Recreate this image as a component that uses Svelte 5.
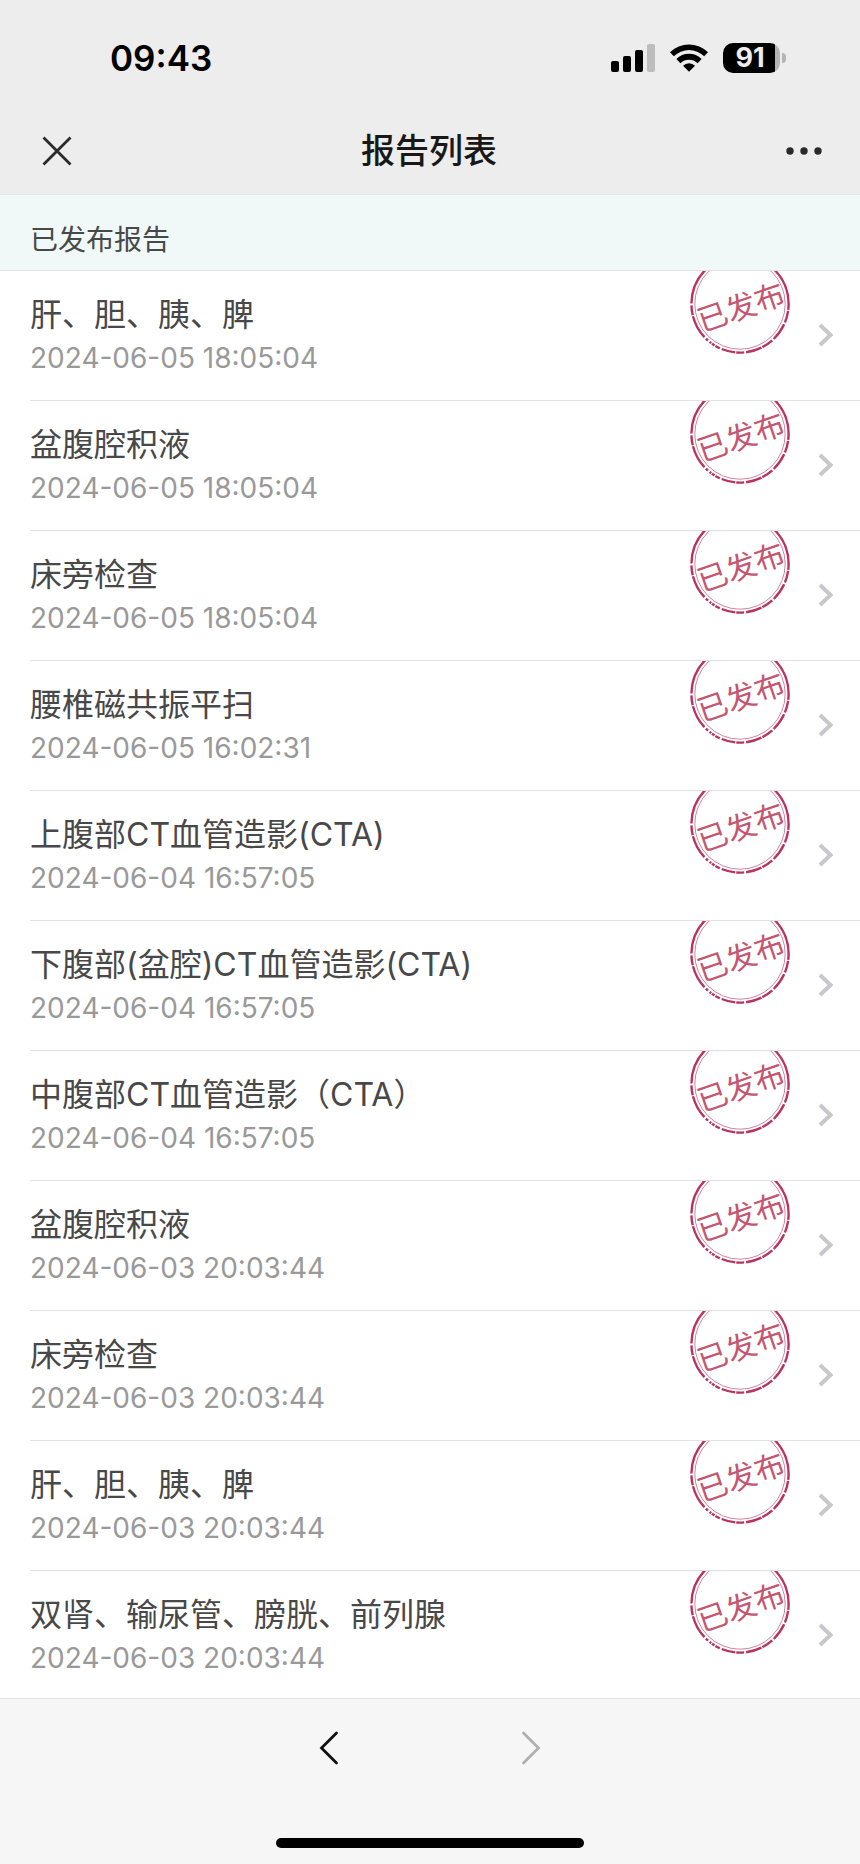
<script lang="ts">
  type Report = { name: string; time: string };

  const reports: Report[] = [
    { name: '肝、胆、胰、脾', time: '2024-06-05 18:05:04' },
    { name: '盆腹腔积液', time: '2024-06-05 18:05:04' },
    { name: '床旁检查', time: '2024-06-05 18:05:04' },
    { name: '腰椎磁共振平扫', time: '2024-06-05 16:02:31' },
    { name: '上腹部CT血管造影(CTA)', time: '2024-06-04 16:57:05' },
    { name: '下腹部(盆腔)CT血管造影(CTA)', time: '2024-06-04 16:57:05' },
    { name: '中腹部CT血管造影（CTA）', time: '2024-06-04 16:57:05' },
    { name: '盆腹腔积液', time: '2024-06-03 20:03:44' },
    { name: '床旁检查', time: '2024-06-03 20:03:44' },
    { name: '肝、胆、胰、脾', time: '2024-06-03 20:03:44' },
    { name: '双肾、输尿管、膀胱、前列腺', time: '2024-06-03 20:03:44' },
  ];
</script>

<div class="screen">
  <div class="top">
    <div class="status-bar">
      <span class="clock">09:43</span>
      <div class="status-icons">
        <svg width="44" height="28" viewBox="0 0 44 28" aria-hidden="true">
          <rect x="0" y="17" width="8" height="11" rx="2" />
          <rect x="12" y="12" width="8" height="16" rx="2" />
          <rect x="24" y="6" width="8" height="22" rx="2" />
          <rect x="36" y="0" width="8" height="28" rx="2" fill="#bdbdbd" />
        </svg>
        <svg width="38" height="28" viewBox="0 0 38 28" aria-hidden="true">
          <path d="M0 8.2 A27 27 0 0 1 38 8.2 L34.2 12.2 A22 22 0 0 0 3.8 12.2 Z" />
          <path d="M6.4 15 A17.6 17.6 0 0 1 31.6 15 L27.6 19.2 A12.4 12.4 0 0 0 10.4 19.2 Z" />
          <path d="M13 21.8 A8.4 8.4 0 0 1 25 21.8 L19 27.8 Z" />
        </svg>
        <div class="battery">
          <span class="battery-level">91</span>
          <span class="battery-tip"></span>
        </div>
      </div>
    </div>

    <header class="title-bar">
      <button class="icon-button" aria-label="关闭">
        <svg width="30" height="30" viewBox="0 0 30 30" aria-hidden="true">
          <path d="M1.5 1.5 L28.5 28.5 M28.5 1.5 L1.5 28.5" stroke="#2a2a2a" stroke-width="2.8" />
        </svg>
      </button>
      <h1>报告列表</h1>
      <button class="icon-button" aria-label="更多">
        <svg width="36" height="8" viewBox="0 0 36 8" fill="#2a2a2a" aria-hidden="true">
          <circle cx="4" cy="4" r="3.7" />
          <circle cx="18" cy="4" r="3.7" />
          <circle cx="32" cy="4" r="3.7" />
        </svg>
      </button>
    </header>
  </div>

  <main>
    <h2>已发布报告</h2>
    <ul>
      {#each reports as report}
        <li>
          <a class="report" href="#report">
            <span class="info">
              <span class="name">{report.name}</span>
              <time>{report.time}</time>
            </span>
            <svg class="stamp" width="104" height="86" viewBox="0 0 104 86">
              <g fill="none" stroke="#b8335f">
                <circle
                  cx="52" cy="33" r="48.6" stroke-width="2.4"
                  stroke-dasharray="6 1 12 2 18 2 12 1 16 2 8 1 14 2 5 1 3 1 2 2 3 2 24 1 10 2 200"
                />
                <circle cx="52" cy="33" r="45.2" stroke-width="1" opacity="0.6" />
              </g>
              <text x="53" y="47" text-anchor="middle" transform="rotate(-19 53 36)">已发布</text>
            </svg>
            <svg class="chevron" width="16" height="24" viewBox="0 0 16 24" aria-hidden="true">
              <path d="M2 2 L12.5 12 L2 22" fill="none" stroke="#c7c7cc" stroke-width="4" />
            </svg>
          </a>
        </li>
      {/each}
    </ul>
  </main>

  <footer>
    <nav>
      <button class="icon-button" aria-label="后退">
        <svg width="20" height="36" viewBox="0 0 20 36" aria-hidden="true">
          <path d="M17.5 3 L2.5 18 L17.5 33" fill="none" stroke="#111" stroke-width="2.8" stroke-linecap="round" />
        </svg>
      </button>
      <button class="icon-button" aria-label="前进" disabled>
        <svg width="20" height="36" viewBox="0 0 20 36" aria-hidden="true">
          <path d="M2.5 3 L17.5 18 L2.5 33" fill="none" stroke="#b0b0b0" stroke-width="2.8" stroke-linecap="round" />
        </svg>
      </button>
    </nav>
    <div class="home-indicator"></div>
  </footer>
</div>

<style>
  :global(body) {
    background: #fff;
  }

  .screen {
    display: flex;
    flex-direction: column;
    min-height: 100vh;
    font-family: Inter, 'Noto Sans CJK SC', sans-serif;
    color: #484848;
  }

  .top {
    background: #ededed;
    border-bottom: 1px solid #e8e8ea;
  }

  .status-bar {
    display: flex;
    align-items: center;
    justify-content: space-between;
    height: 116px;
    padding: 0 74px 0 110px;
  }

  .clock {
    font-size: 35px;
    font-weight: 600;
    line-height: 40px;
    color: #000;
  }

  .status-icons {
    display: flex;
    align-items: center;
    gap: 15px;
  }

  .battery {
    display: flex;
    align-items: center;
    gap: 2px;
  }

  .battery-level {
    box-sizing: border-box;
    width: 57px;
    padding-right: 3px;
    border-radius: 10px;
    background: linear-gradient(90deg, #000 52px, #b4b4b4 52px);
    color: #ededed;
    font-size: 27px;
    font-weight: 700;
    line-height: 30px;
    text-align: center;
  }

  .battery-tip {
    width: 4px;
    height: 10px;
    border-radius: 0 5px 5px 0;
    background: #b4b4b4;
  }

  .title-bar {
    display: flex;
    align-items: center;
    justify-content: space-between;
    height: 70px;
    padding: 0 38px 8px 42px;
  }

  .icon-button {
    display: flex;
    padding: 0;
    border: 0;
    background: none;
  }

  h1 {
    margin: 0;
    font-size: 34px;
    font-weight: 500;
    line-height: 42px;
    color: #181818;
  }

  main {
    flex: 1;
  }

  h2 {
    margin: 0;
    padding: 25px 30px 10px;
    border-bottom: 1px solid #dfe3e3;
    background: #f0f9f8;
    font-size: 28px;
    font-weight: 400;
    line-height: 40px;
  }

  ul {
    margin: 0;
    padding: 0 0 0 30px;
    list-style: none;
  }

  li + li {
    margin-top: 2px;
    border-top: 1px solid #e2e2e2;
  }

  .report {
    display: flex;
    align-items: center;
    height: 127px;
    padding-right: 26px;
    color: inherit;
    text-decoration: none;
  }

  .info {
    display: flex;
    flex: 1;
    flex-direction: column;
  }

  .name {
    font-size: 32px;
    line-height: 46px;
  }

  time {
    font-size: 28px;
    line-height: 40px;
    color: #999;
  }

  .stamp {
    align-self: flex-start;
    margin-right: 26px;
  }

  .stamp text {
    fill: #c4566f;
    font-size: 30px;
  }

  footer {
    border-top: 1px solid #e2e2e2;
    background: #f6f6f6;
  }

  nav {
    display: flex;
    justify-content: center;
    gap: 182px;
    padding: 31px 0 72px;
  }

  .home-indicator {
    width: 308px;
    height: 10px;
    margin: 0 auto 16px;
    border-radius: 5px;
    background: #000;
  }
</style>
